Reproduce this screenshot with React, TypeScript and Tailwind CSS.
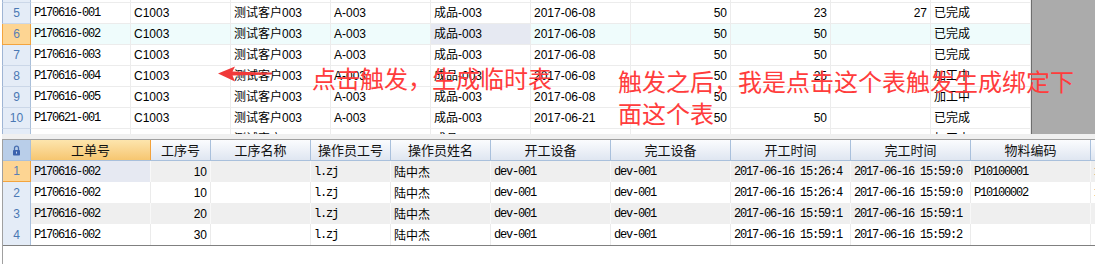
import React from 'react';
import { clsx } from 'clsx';

const sans = "font-['Liberation_Sans','Noto_Sans_CJK_SC',sans-serif] text-[12px]";
const song = "font-['Liberation_Mono','Noto_Sans_CJK_SC',monospace] text-[12px] tracking-[-1.2px]";
const cjk = "font-['Noto_Sans_CJK_SC',sans-serif] text-[12px]";

type TopRow = { n: string; cells: string[]; sel?: boolean };

const topRows: TopRow[] = [
  { n: '5', cells: ['P170616-001', 'C1003', '测试客户003', 'A-003', '成品-003', '2017-06-08', '50', '23', '27', '已完成'] },
  { n: '6', cells: ['P170616-002', 'C1003', '测试客户003', 'A-003', '成品-003', '2017-06-08', '50', '50', '', '已完成'], sel: true },
  { n: '7', cells: ['P170616-003', 'C1003', '测试客户003', 'A-003', '成品-003', '2017-06-08', '50', '50', '', '已完成'] },
  { n: '8', cells: ['P170616-004', 'C1003', '测试客户003', 'A-003', '成品-003', '2017-06-08', '50', '25', '', '加工中'] },
  { n: '9', cells: ['P170616-005', 'C1003', '测试客户003', 'A-003', '成品-003', '2017-06-08', '50', '', '', '加工中'] },
  { n: '10', cells: ['P170621-001', 'C1003', '测试客户003', 'A-003', '成品-003', '2017-06-21', '50', '50', '', '已完成'] },
  // only the tops of the tall glyphs peek out under the splitter
  { n: '11', cells: ['', '', '测试客户', '', '成品', '', '', '', '', '加工中'] },
];

const cols = [
  { title: '工单号', w: 'w-[120px]', font: song, right: false },
  { title: '工序号', w: 'w-[60px]', font: sans, right: true },
  { title: '工序名称', w: 'w-[100px]', font: sans, right: false },
  { title: '操作员工号', w: 'w-[80px]', font: song, right: false },
  { title: '操作员姓名', w: 'w-[100px]', font: cjk, right: false },
  { title: '开工设备', w: 'w-[120px]', font: song, right: false },
  { title: '完工设备', w: 'w-[120px]', font: song, right: false },
  { title: '开工时间', w: 'w-[120px]', font: song, right: false },
  { title: '完工时间', w: 'w-[120px]', font: song, right: false },
  { title: '物料编码', w: 'w-[120px]', font: song, right: false },
  { title: '', w: 'w-[100px]', font: song, right: false },
];

const bottomRows = [
  ['1', 'P170616-002', '10', '', 'l.zj', '陆中杰', 'dev-001', 'dev-001', '2017-06-16 15:26:4', '2017-06-16 15:59:0', 'P10100001', '1'],
  ['2', 'P170616-002', '10', '', 'l.zj', '陆中杰', 'dev-001', 'dev-001', '2017-06-16 15:26:4', '2017-06-16 15:59:0', 'P10100002', '1'],
  ['3', 'P170616-002', '20', '', 'l.zj', '陆中杰', 'dev-001', 'dev-001', '2017-06-16 15:59:1', '2017-06-16 15:59:1', '', ''],
  ['4', 'P170616-002', '30', '', 'l.zj', '陆中杰', 'dev-001', 'dev-001', '2017-06-16 15:59:1', '2017-06-16 15:59:2', '', ''],
];

const LockIcon = () => (
  <svg width="9" height="11" viewBox="0 0 9 11">
    <path d="M2.5 5V3.2a2 2 0 0 1 4 0V5" fill="none" stroke="#4a6fb0" strokeWidth="1.3" />
    <rect x="1" y="5" width="7" height="5.5" rx="0.8" fill="#3d63ad" />
    <rect x="4" y="6.6" width="1" height="2" fill="#c9d8f0" />
  </svg>
);

export default function App() {
  return (
    <div className="relative w-[1095px] h-[264px] overflow-hidden bg-white text-black">
      {/* upper grid */}
      <div className="flex h-[134px] overflow-hidden">
        <div className="w-[1031px] pl-[2px] flex flex-col">
          {/* tail of row 4 */}
          <div className="flex h-[3px] shrink-0">
            <div className="w-[29px] shrink-0 border-l border-r border-b border-l-[#9fb5d4] border-r-[#a9bfd9] border-b-[#cbd7e8] bg-[#e4ecf7]" />
            {Array.from({ length: 10 }).map((_, i) => (
              <div key={i} className="w-[100px] shrink-0 border-r border-b border-[#ececec]" />
            ))}
          </div>
          {topRows.map(r => (
            <div key={r.n} className={clsx('flex h-[21px] shrink-0', r.sel && 'bg-[#effcfc]')}>
              <div
                className={clsx(
                  'w-[29px] shrink-0 flex items-center justify-center border-l border-r border-b text-[12px] font-["Liberation_Sans",sans-serif]',
                  r.sel
                    ? 'bg-[#fdd593] border-[#f3a43e] text-[#5a7fb5]'
                    : 'bg-[#e4ecf7] border-l-[#9fb5d4] border-r-[#a9bfd9] border-b-[#cbd7e8] text-[#4a78b4]'
                )}
              >
                {r.n}
              </div>
              {r.cells.map((c, i) => (
                <div
                  key={i}
                  className={clsx(
                    'w-[100px] shrink-0 flex items-center border-r border-b border-[#ececec] px-[3px] whitespace-nowrap overflow-hidden',
                    i === 0 ? song : sans,
                    i >= 6 && i <= 8 ? 'justify-end' : 'justify-start',
                    r.sel && i === 4 && 'bg-[#e6e9f2]'
                  )}
                >
                  {c}
                </div>
              ))}
            </div>
          ))}
        </div>
        <div className="flex-1 bg-[#ababab] border-l border-[#6e6e6e]" />
      </div>

      {/* splitter */}
      <div className="h-[5px] ml-[2px] bg-[#f0f0f0]" />

      {/* lower grid */}
      <div className="pl-[2px] h-[125px]">
        <div className="h-full border-l border-t border-[#a0a0a0] flex flex-col">
          <div className="flex h-[21px] shrink-0 border-b border-[#a9c0dc] whitespace-nowrap">
            <div className="w-[28px] shrink-0 flex items-center justify-center bg-[#b9cee9] border-r border-[#a9c0dc]">
              <LockIcon />
            </div>
            {cols.map((c, i) => (
              <div
                key={i}
                className={clsx(
                  'shrink-0 flex items-center justify-center border-r text-[13px] leading-[20px] text-[#111]',
                  "font-['Noto_Sans_CJK_SC',sans-serif]",
                  c.w,
                  i === 0
                    ? 'bg-gradient-to-b from-[#fde5ad] to-[#f6c670] border-[#f2a23c]'
                    : 'bg-gradient-to-b from-[#fbfcfe] to-[#dfe6f1] border-[#a9c0dc]'
                )}
              >
                {c.title}
              </div>
            ))}
          </div>
          {bottomRows.map((r, ri) => {
            const gray = ri % 2 === 0;
            return (
              <div key={r[0]} className={clsx('flex h-[21px] shrink-0 whitespace-nowrap', gray ? 'bg-[#efefef]' : 'bg-white')}>
                <div
                  className={clsx(
                    'w-[28px] shrink-0 flex items-center justify-center border-r text-[12px] font-["Liberation_Sans",sans-serif]',
                    ri === 0
                      ? 'bg-[#fdd593] border-[#f3a43e] border-b text-[#5a7fb5]'
                      : 'bg-[#e4ecf7] border-[#a9c0dc] text-[#4a78b4]'
                  )}
                >
                  {r[0]}
                </div>
                {cols.map((c, i) => (
                  <div
                    key={i}
                    className={clsx(
                      'shrink-0 flex items-center border-r px-[3px] overflow-hidden',
                      c.w,
                      c.font,
                      c.right ? 'justify-end' : 'justify-start',
                      gray ? 'border-[#f8f8f8]' : 'border-[#ebebeb]',
                      ri === 0 && i === 0 && 'bg-[#e6e9f2]'
                    )}
                  >
                    {r[i + 1]}
                  </div>
                ))}
              </div>
            );
          })}
          <div className="flex-1 border-t border-[#808080]" />
        </div>
      </div>

      {/* annotations drawn on the screenshot */}
      <svg className="absolute left-[216px] top-[64px]" width="60" height="20" viewBox="0 0 60 20">
        <polygon points="2,9.5 19,2.5 16.5,7.6 56,8.6 56,10.4 16.5,11.6 19,17.5" fill="#f03a3a" />
      </svg>
      <div className="absolute left-[312px] top-[64px] text-[24px] leading-[28px] text-[#ff3c3c] font-['Noto_Sans_CJK_SC',sans-serif] whitespace-nowrap">
        点击触发，生成临时表
      </div>
      <div className="absolute left-[618px] top-[65px] text-[24px] leading-[32px] text-[#ff3c3c] font-['Noto_Sans_CJK_SC',sans-serif] whitespace-nowrap">
        触发之后，我是点击这个表触发生成绑定下
        <br />
        面这个表
      </div>
    </div>
  );
}
